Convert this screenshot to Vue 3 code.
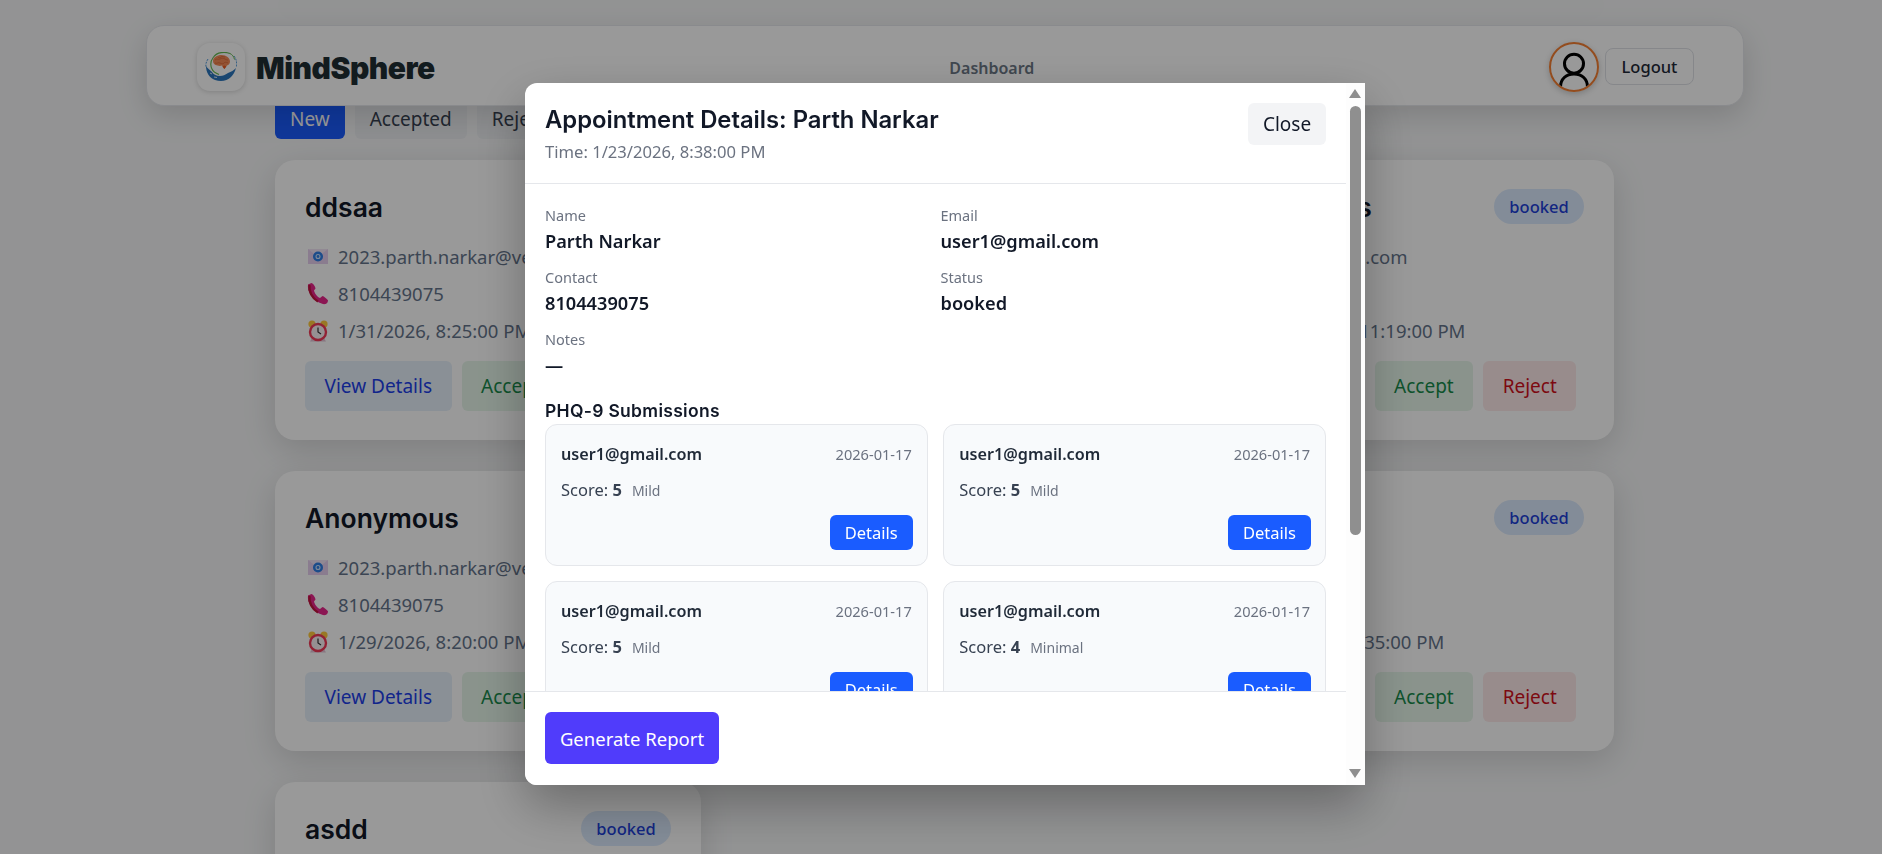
<script setup>
const cards = [
  { name: 'ddsaa', email: '2023.parth.narkar@vesit.edu', phone: '8104439075', time: '1/31/2026, 8:25:00 PM' },
  { name: 'Rahul', email: 'rahul@gmail.com', phone: '8104439075', time: '1/30/2026, 8:10:00 PM' },
  { name: 'Anonymous', email: 'user1@gmail.com', phone: '8104439075', time: '12/23/2026, 11:19:00 PM' },
  { name: 'Anonymous', email: '2023.parth.narkar@vesit.edu', phone: '8104439075', time: '1/29/2026, 8:20:00 PM' },
  { name: 'Sneha', email: 'sneha@gmail.com', phone: '8104439075', time: '1/28/2026, 8:30:00 PM' },
  { name: 'Parth', email: 'parth@x.in', phone: '81044390751', time: '1/23/2026, 8:35:00 PM' },
  { name: 'asdd', email: '2023.parth.narkar@vesit.edu', phone: '8104439075', time: '1/27/2026, 8:05:00 PM' }
]

const submissions = [
  { score: 5, level: 'Mild' },
  { score: 5, level: 'Mild' },
  { score: 5, level: 'Mild' },
  { score: 4, level: 'Minimal' }
]
</script>

<template>
  <div class="page">
    <div class="top-shadow"></div>

    <header class="navbar">
      <div class="brand">
        <span class="logo">
          <svg viewBox="0 0 32 30" width="32" height="30">
            <path d="M3 7C1 10 .5 13 1 15M29 4c2.500 3 3 7 2.500 11" fill="none" stroke="#3f8fd6" stroke-width=".9" stroke-dasharray="2 1" />
            <path d="M25 1.500C20-.5 12 0 8.500 5 5.500 9 5.500 14 7 17c1 2.500 3 4 7 5.500" fill="none" stroke="#62b84f" stroke-width="1.100" />
            <path d="M25 1.500c2 1 4 3 4.500 6" fill="none" stroke="#62b84f" stroke-width="1" />
            <path d="M8 9c0-3.500 4-6 8.500-6 5 0 8.500 3 8.500 6.500 0 2.500-1.500 3.500-3 4l-2.500 3.500-2.500-3.500c-1.500.5-3 .5-4.500 0C9.500 13 8 11.500 8 9z" fill="#f58b58" />
            <path d="M10 8c2-2 3 0 5-1s3-1 5 0 2 1 3 1M10 11c2 1 3-1 5 0s3 1 4 0 2-1 4 0M13 5c1 1 2 1 3 0s3 0 4 0" fill="none" stroke="#d9632f" stroke-width=".7" />
            <path d="M19.300 13.500l-2 1 2 2.500 2-2.500z" fill="#ec5a22" />
            <path d="M1 14c0 6 3 12 9 14 6 2 12 1 16-3 2-2 4-5 5-9-2 2-5 4-8 5-3 2-5 3-8 3-4 0-7-2-8-4-2-2-5-4-6-6z" fill="#2b76bd" />
            <path d="M5 21l2 1M9 25l3 .5" stroke="#fff" stroke-width=".8" />
          </svg>
        </span>
        <span class="brand-name">MindSphere</span>
      </div>
      <nav class="nav-link">Dashboard</nav>
      <div class="user">
        <span class="avatar">
          <svg viewBox="0 0 46 46" width="46" height="46">
            <circle cx="23" cy="19.700" r="9.500" fill="none" stroke="#000" stroke-width="3" />
            <path d="M9.500 43C9.500 35 15 30 23 30S36.500 35 36.500 43" fill="none" stroke="#000" stroke-width="3" />
          </svg>
        </span>
        <button class="logout">Logout</button>
      </div>
    </header>

    <main class="content">
      <div class="tabs">
        <button class="tab active">New</button>
        <button class="tab">Accepted</button>
        <button class="tab">Rejected</button>
      </div>

      <div class="grid">
        <article v-for="(c, i) in cards" :key="i" class="card">
          <div class="card-head">
            <h3>{{ c.name }}</h3>
            <span class="badge">booked</span>
          </div>
          <div class="line">
            <svg class="emoji" viewBox="0 0 23 23">
              <rect x="3" y="4" width="20" height="15" fill="#e6cfee" />
              <path d="M3 4l10 8 10-8z" fill="#f2e4f6" />
              <circle cx="13" cy="11.500" r="5" fill="#2f7fe6" />
              <circle cx="13" cy="11.500" r="2" fill="none" stroke="#cfe3ff" stroke-width="1.100" />
            </svg>
            <span>{{ c.email }}</span>
          </div>
          <div class="line">
            <svg class="emoji" viewBox="0 0 23 23">
              <path d="M6.500 1L3 2.500C2 9 7 17 14 20.500c2 1 4.500 2 6.500 1.500 1.500-.5 2.500-2 2.500-3.500 0-1-4.500-4.500-5.500-4.500l-2.500 2C12 15 9.500 11 9 8.500L10.500 6.500C10.500 5 8 1 6.500 1z" fill="#e8258a" />
              <path d="M4.500 3C3.500 9 7 16 13 19.500" fill="none" stroke="#c0163c" stroke-width="2.400" />
            </svg>
            <span>{{ c.phone }}</span>
          </div>
          <div class="line">
            <svg class="emoji" viewBox="0 0 23 23">
              <circle cx="7" cy="5" r="3.600" fill="#ffc83d" />
              <circle cx="19" cy="5" r="3.600" fill="#ffc83d" />
              <path d="M7 19l-2 3.500h16L19 19z" fill="#e4c4d6" />
              <circle cx="13" cy="13" r="8" fill="#fbf2f4" stroke="#f23a58" stroke-width="2.400" />
              <path d="M13 8.500V13l3 2" fill="none" stroke="#333" stroke-width="1.200" />
            </svg>
            <span>{{ c.time }}</span>
          </div>
          <div class="actions">
            <button class="act view">View Details</button>
            <button class="act accept">Accept</button>
            <button class="act reject">Reject</button>
          </div>
        </article>
      </div>
    </main>

    <div class="overlay">
      <section class="modal">
        <div class="modal-main">
          <div class="modal-head">
            <div>
              <h2>Appointment Details: Parth Narkar</h2>
              <p class="time">Time: 1/23/2026, 8:38:00 PM</p>
            </div>
            <button class="close">Close</button>
          </div>

          <div class="modal-body">
            <div class="info">
              <div>
                <div class="label">Name</div>
                <div class="value">Parth Narkar</div>
              </div>
              <div>
                <div class="label">Email</div>
                <div class="value">user1@gmail.com</div>
              </div>
              <div>
                <div class="label">Contact</div>
                <div class="value">8104439075</div>
              </div>
              <div>
                <div class="label">Status</div>
                <div class="value">booked</div>
              </div>
              <div>
                <div class="label">Notes</div>
                <div class="value">—</div>
              </div>
            </div>

            <h4>PHQ-9 Submissions</h4>
            <div class="subs">
              <div v-for="(s, i) in submissions" :key="i" class="sub">
                <div class="sub-top">
                  <span class="sub-email">user1@gmail.com</span>
                  <span class="sub-date">2026-01-17</span>
                </div>
                <div class="score">Score: <b>{{ s.score }}</b><span class="level">{{ s.level }}</span></div>
                <div class="sub-foot">
                  <button class="details">Details</button>
                </div>
              </div>
            </div>
          </div>

          <div class="modal-foot">
            <button class="generate">Generate Report</button>
          </div>
        </div>

        <div class="scrollbar">
          <span class="arrow up"></span>
          <span class="thumb"></span>
          <span class="arrow down"></span>
        </div>
      </section>
    </div>
  </div>
</template>

<style>
html,
body {
  margin: 0;
  background: #f5f6f7;
}
</style>

<style scoped>
.page {
  position: relative;
  height: 854px;
  overflow: hidden;
  background: #f5f6f7;
  font-family: "Noto Sans", "Open Sans", sans-serif;
  color: #111827;
}

button {
  font-family: inherit;
  border: none;
  cursor: pointer;
}

h2,
h3,
h4,
p {
  margin: 0;
}

.top-shadow {
  height: 1px;
  margin: -1px 280px 0;
  box-shadow: 0 6px 26px rgba(0, 0, 0, 0.22);
}

.navbar {
  position: relative;
  z-index: 2;
  display: flex;
  align-items: center;
  justify-content: space-between;
  box-sizing: border-box;
  height: 81px;
  margin: 25px 138px 0 146px;
  padding: 2px 49px 0 50px;
  background: #fff;
  border: 1px solid #e5e7eb;
  border-radius: 18px;
  box-shadow: 0 10px 30px rgba(0, 0, 0, 0.14);
}

.brand {
  display: flex;
  align-items: center;
  gap: 11px;
}

.logo {
  display: flex;
  align-items: center;
  justify-content: center;
  width: 48px;
  height: 48px;
  border-radius: 13px;
  background: #fff;
  box-shadow: 0 1px 5px rgba(0, 0, 0, 0.16);
}

.brand-name {
  padding-top: 2px;
  font-family: Inter, sans-serif;
  font-size: 30px;
  font-weight: 900;
  letter-spacing: -0.5px;
  color: #1f2d33;
}

.nav-link {
  padding-top: 2px;
  font-size: 16px;
  font-weight: 600;
  color: #6b7785;
}

.user {
  display: flex;
  align-items: center;
  gap: 6px;
}

.avatar {
  display: flex;
  align-items: center;
  justify-content: center;
  width: 46px;
  height: 46px;
  border: 2px solid #f57f32;
  border-radius: 50%;
  overflow: hidden;
  box-shadow: 0 2px 6px rgba(0, 0, 0, 0.2);
}

.logout {
  width: 89px;
  height: 37px;
  background: transparent;
  border: 1px solid #dfe2e7;
  border-radius: 8px;
  font-size: 16.500px;
  font-weight: 500;
  color: #1f2937;
}

.content {
  padding: 0 268px 0 275px;
}

.tabs {
  display: flex;
  gap: 10px;
  margin-top: -7px;
}

.tab {
  height: 40px;
  padding: 0 15px;
  border-radius: 6px;
  background: #eceef1;
  font-size: 19px;
  color: #374151;
}

.tab.active {
  background: #1a5cff;
  color: #fff;
}

.grid {
  display: grid;
  grid-template-columns: repeat(3, 1fr);
  gap: 31px 30.500px;
  margin-top: 21px;
}

.card {
  box-sizing: border-box;
  height: 280px;
  padding: 29px 30px 30px;
  background: #fff;
  border-radius: 20px;
  box-shadow: 0 10px 34px rgba(0, 0, 0, 0.14);
}

.card-head {
  display: flex;
  align-items: center;
  justify-content: space-between;
  height: 35px;
  margin-bottom: 14px;
}

h3 {
  font-family: Inter, sans-serif;
  font-size: 26.500px;
  font-weight: 600;
  color: #111827;
}

.badge {
  display: flex;
  align-items: center;
  justify-content: center;
  width: 90px;
  height: 35px;
  border-radius: 18px;
  background: #dbeafe;
  font-size: 16.500px;
  font-weight: 500;
  color: #1d3fd8;
}

.line {
  display: flex;
  align-items: center;
  gap: 10px;
  height: 37px;
  font-size: 18.500px;
  color: #64748b;
  white-space: nowrap;
}

.emoji {
  flex: none;
  width: 23px;
  height: 23px;
}

.actions {
  display: flex;
  gap: 10px;
  margin-top: 12px;
}

.act {
  height: 50px;
  padding: 0 19.500px;
  border-radius: 6px;
  font-size: 19px;
  white-space: nowrap;
}

.view {
  background: #e6f0fb;
  color: #1d3fe8;
}

.accept {
  background: #e6f6ea;
  color: #178a4a;
}

.reject {
  background: #fdeaea;
  color: #d0101c;
}

.overlay {
  position: absolute;
  inset: 0;
  z-index: 5;
  display: flex;
  align-items: flex-start;
  justify-content: center;
  padding: 83px 0 0 8px;
  background: rgba(0, 0, 0, 0.4);
  backdrop-filter: blur(0.6px);
}

.modal {
  display: flex;
  width: 840px;
  height: 702px;
  overflow: hidden;
  background: #fff;
  border-radius: 12px 0 0 12px;
  box-shadow: 0 20px 50px rgba(0, 0, 0, 0.3);
}

.modal-main {
  flex: 1;
  min-width: 0;
  display: flex;
  flex-direction: column;
}

.modal-head {
  display: flex;
  justify-content: space-between;
  box-sizing: border-box;
  height: 101px;
  padding: 20px;
  border-bottom: 1px solid #e5e7eb;
}

h2 {
  font-family: Inter, sans-serif;
  font-size: 23.800px;
  font-weight: 600;
  line-height: 34px;
  color: #111827;
}

.time {
  margin-top: 3px;
  font-size: 16.600px;
  line-height: 24px;
  color: #6b7280;
}

.close {
  width: 78px;
  height: 42px;
  border-radius: 6px;
  background: #f3f4f6;
  font-size: 19px;
  color: #111827;
}

.modal-body {
  flex: 1;
  min-height: 0;
  overflow: hidden;
  padding: 21px 20px 20px;
}

.info {
  display: grid;
  grid-template-columns: 1fr 1fr;
  gap: 12px 10px;
}

.label {
  height: 22px;
  font-size: 14.500px;
  line-height: 20px;
  color: #6b7280;
}

.value {
  height: 28px;
  font-size: 18.200px;
  font-weight: 600;
  line-height: 28px;
  color: #111827;
}

h4 {
  margin-top: 20px;
  font-family: Inter, sans-serif;
  font-size: 17.500px;
  font-weight: 600;
  letter-spacing: 0.3px;
  line-height: 24px;
  color: #111827;
}

.subs {
  display: grid;
  grid-template-columns: 1fr 1fr;
  gap: 15.500px;
  margin-top: 1px;
}

.sub {
  box-sizing: border-box;
  height: 141.500px;
  padding: 15px;
  background: #f8fafc;
  border: 1px solid #e5e7eb;
  border-radius: 12px;
}

.sub-top {
  display: flex;
  align-items: center;
  justify-content: space-between;
  height: 28px;
}

.sub-email {
  font-size: 16.200px;
  font-weight: 600;
  color: #1f2937;
}

.sub-date {
  font-size: 14.600px;
  color: #6b7280;
}

.score {
  margin-top: 8px;
  font-size: 16.500px;
  line-height: 28px;
  color: #374151;
}

.score b {
  font-weight: 700;
}

.level {
  margin-left: 10px;
  font-size: 14px;
  color: #6b7280;
}

.sub-foot {
  display: flex;
  justify-content: flex-end;
  margin-top: 10px;
  margin-right: -1px;
}

.details {
  width: 83px;
  height: 35px;
  border-radius: 6px;
  background: #1a5cff;
  font-size: 16.500px;
  color: #fff;
}

.modal-foot {
  height: 94px;
  box-sizing: border-box;
  padding: 20px;
  background: #fff;
  border-top: 1px solid #e5e7eb;
}

.generate {
  width: 174px;
  height: 52px;
  border-radius: 6px;
  background: #503cfb;
  font-size: 18.500px;
  color: #fff;
}

.scrollbar {
  position: relative;
  flex: none;
  width: 19px;
  background: #fdfdfd;
}

.thumb {
  position: absolute;
  top: 23px;
  left: 4px;
  width: 11px;
  height: 429px;
  border-radius: 6px;
  background: #8f8f8f;
}

.arrow {
  position: absolute;
  left: 3px;
  width: 0;
  height: 0;
  border-left: 6px solid transparent;
  border-right: 6px solid transparent;
}

.arrow.up {
  top: 6px;
  border-bottom: 9px solid #8f8f8f;
}

.arrow.down {
  bottom: 7px;
  border-top: 9px solid #8f8f8f;
}
</style>
